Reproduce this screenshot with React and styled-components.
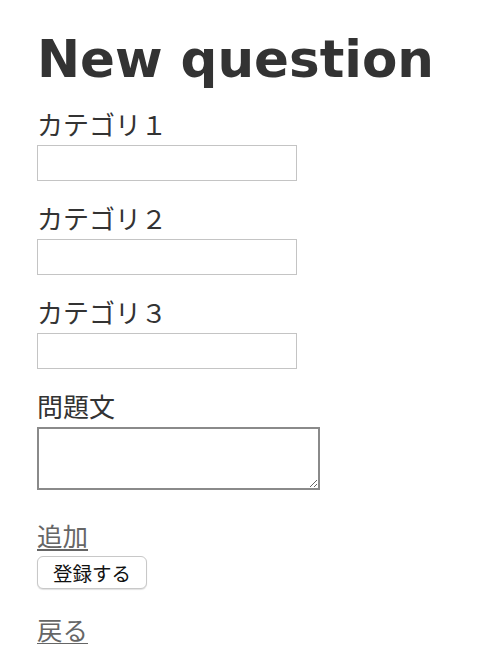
import styled, { createGlobalStyle } from "styled-components";

const GlobalStyle = createGlobalStyle`
  body {
    margin: 0;
    background: #fff;
    color: #333;
    font-family: "Noto Sans CJK JP", "Noto Sans", sans-serif;
  }
`;

const Page = styled.div`
  padding: 29px 37px 0;
`;

const Title = styled.h1`
  margin: 0 0 20px;
  font-family: "DejaVu Sans", Verdana, sans-serif;
  font-weight: bold;
  font-size: 51.5px;
  line-height: 60px;
  color: #333;
`;

const Field = styled.div`
  display: flex;
  flex-direction: column;
  align-items: flex-start;
  margin-bottom: 22px;
`;

const Label = styled.label`
  font-size: 26px;
  line-height: 30px;
  color: #333;
  margin-bottom: 6px;
`;

const TextInput = styled.input`
  box-sizing: border-box;
  width: 260px;
  height: 36px;
  margin: 0;
  border: 1px solid #c4c4c4;
  background: #fff;
  font-size: 18px;
  outline: none;
`;

const TextArea = styled.textarea`
  box-sizing: border-box;
  width: 283px;
  height: 63px;
  margin: 0;
  border: 2px solid #8a8a8a;
  background: #fff;
  font-size: 18px;
  outline: none;
`;

const Actions = styled.div`
  display: flex;
  flex-direction: column;
  align-items: flex-start;
  margin-top: 30px;
`;

const Link = styled.a`
  font-size: 25.5px;
  line-height: 30px;
  color: #666;
  text-decoration: underline;
  text-underline-offset: 3px;
  cursor: pointer;
`;

const SubmitButton = styled.button`
  box-sizing: border-box;
  width: 110px;
  height: 33px;
  margin: 6px 0 25px;
  padding: 0;
  border: 1px solid #c8c8c8;
  border-radius: 6px;
  background: #fff;
  box-shadow: 0 1px 1px rgba(0, 0, 0, 0.12);
  font-family: "Noto Sans CJK JP", sans-serif;
  font-size: 19.5px;
  color: #111;
`;

export default function App() {
  return (
    <Page>
      <GlobalStyle />
      <Title>New question</Title>
      <Field>
        <Label>カテゴリ１</Label>
        <TextInput type="text" />
      </Field>
      <Field>
        <Label>カテゴリ２</Label>
        <TextInput type="text" />
      </Field>
      <Field>
        <Label>カテゴリ３</Label>
        <TextInput type="text" />
      </Field>
      <Field>
        <Label>問題文</Label>
        <TextArea />
      </Field>
      <Actions>
        <Link>追加</Link>
        <SubmitButton type="button">登録する</SubmitButton>
        <Link>戻る</Link>
      </Actions>
    </Page>
  );
}
